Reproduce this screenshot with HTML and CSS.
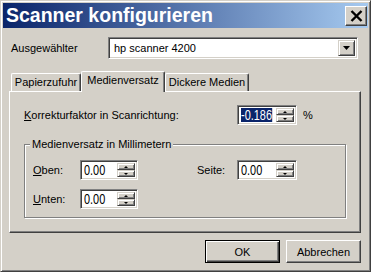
FILE: index.html
```html
<!DOCTYPE html>
<html lang="de">
<head>
  <meta charset="UTF-8">
  <title>Scanner konfigurieren</title>
  <link rel="stylesheet" href="styles.css">
</head>
<body>
  <div class="window">
    <div class="titlebar">
      <span class="title">Scanner konfigurieren</span>
      <div class="close">
        <svg width="13" height="12" viewBox="0 0 13 12"><path d="M1.5 1 L11.5 11 M11.5 1 L1.5 11" stroke="#000" stroke-width="2.4" fill="none"/></svg>
      </div>
    </div>

    <div class="content">
      <!-- Scanner selection -->
      <div class="select-row">
        <span class="select-label">Ausgewählter</span>
        <div class="combo">
          <span class="combo-text">hp scanner 4200</span>
          <div class="combo-btn">
            <svg width="7" height="4" viewBox="0 0 7 4"><polygon points="0,0 7,0 3.5,4" fill="#000"/></svg>
          </div>
        </div>
      </div>

      <!-- Tabs -->
      <div class="tabs">
        <div class="tab tab-paper">Papierzufuhr</div>
        <div class="tab tab-active">Medienversatz</div>
        <div class="tab tab-thick">Dickere Medien</div>
      </div>

      <div class="panel">
        <div class="factor-row">
          <span class="factor-label"><u>K</u>orrekturfaktor in Scanrichtung:</span>
          <div class="spin spin-wide">
            <div class="spin-value"><span class="num selected">-0.186</span></div>
            <div class="spin-btns">
              <div class="spin-btn"><i class="arrow-up"></i></div>
              <div class="spin-btn"><i class="arrow-down"></i></div>
            </div>
          </div>
          <span class="unit">%</span>
        </div>

        <fieldset class="group">
          <legend>Medienversatz in Millimetern</legend>
          <div class="group-grid">
            <span class="field-label"><u>O</u>ben:</span>
            <div class="spin">
              <div class="spin-value"><span class="num">0.00</span></div>
              <div class="spin-btns">
                <div class="spin-btn"><i class="arrow-up"></i></div>
                <div class="spin-btn"><i class="arrow-down"></i></div>
              </div>
            </div>
            <span></span>
            <span class="field-label">Seite:</span>
            <div class="spin spin-wide">
              <div class="spin-value"><span class="num">0.00</span></div>
              <div class="spin-btns">
                <div class="spin-btn"><i class="arrow-up"></i></div>
                <div class="spin-btn"><i class="arrow-down"></i></div>
              </div>
            </div>

            <span class="field-label"><u>U</u>nten:</span>
            <div class="spin">
              <div class="spin-value"><span class="num">0.00</span></div>
              <div class="spin-btns">
                <div class="spin-btn"><i class="arrow-up"></i></div>
                <div class="spin-btn"><i class="arrow-down"></i></div>
              </div>
            </div>
          </div>
        </fieldset>
      </div>

      <!-- Dialog buttons -->
      <div class="buttons">
        <div class="btn btn-default">OK</div>
        <div class="btn">Abbrechen</div>
      </div>
    </div>
  </div>
</body>
</html>
```

FILE: styles.css
```css
body {
  margin: 0;
  font-family: "Liberation Sans", Arial, sans-serif;
  font-size: 11px;
  color: #000;
  background: #d4d0c8;
}
.window {
  width: 371px;
  height: 272px;
  box-sizing: border-box;
  padding: 2px;
  background: #d4d0c8;
  border: 1px solid;
  border-color: #d4d0c8 #404040 #404040 #d4d0c8;
  box-shadow: inset 1px 1px #fff, inset -1px -1px #808080;
}
.titlebar {
  height: 25px;
  display: flex;
  align-items: center;
  justify-content: space-between;
  padding: 0 1px 0 3px;
  background: linear-gradient(to right, #0a246a, #a6caf0);
}
.title {
  color: #fff;
  font-weight: bold;
  font-size: 19.5px;
}
.close {
  width: 22px;
  height: 20px;
  box-sizing: border-box;
  display: flex;
  align-items: center;
  justify-content: center;
  background: #d4d0c8;
  border: 1px solid;
  border-color: #fff #404040 #404040 #fff;
  box-shadow: inset -1px -1px #808080;
}
.content {
  padding: 9px 7px 0 6px;
}
.select-row {
  display: flex;
  align-items: center;
}
.select-label {
  width: 97px;
  margin-left: 2px;
}
.combo {
  width: 250px;
  height: 22px;
  box-sizing: border-box;
  display: flex;
  align-items: center;
  background: #fff;
  border: 1px solid;
  border-color: #808080 #fff #fff #808080;
  box-shadow: inset 1px 1px #404040, inset -1px -1px #d4d0c8;
  padding: 2px;
}
.combo-text {
  flex: 1;
  padding-left: 3px;
  font-size: 11px;
}
.combo-btn {
  width: 17px;
  height: 16px;
  box-sizing: border-box;
  display: flex;
  align-items: center;
  justify-content: center;
  background: #d4d0c8;
  border: 1px solid;
  border-color: #d4d0c8 #404040 #404040 #d4d0c8;
  box-shadow: inset 1px 1px #fff, inset -1px -1px #808080;
}

/* tabs */
.tabs {
  display: flex;
  align-items: flex-end;
  height: 21px;
  margin-top: 11px;
  padding-left: 2px;
}
.tab {
  height: 18px;
  box-sizing: border-box;
  display: flex;
  align-items: center;
  justify-content: center;
  padding-bottom: 1px;
  border-top: 1px solid #fff;
  border-left: 1px solid #fff;
  border-right: 1px solid #404040;
  border-top-left-radius: 2px;
  border-top-right-radius: 2px;
  box-shadow: inset -1px 0 #808080;
}
.tab-paper {
  width: 70px;
}
.tab-active {
  width: 84px;
  height: 21px;
  margin-bottom: -1px;
  padding-bottom: 4px;
  position: relative;
  z-index: 1;
  background: #d4d0c8;
}
.tab-thick {
  width: 84px;
}
.panel {
  height: 142px;
  box-sizing: border-box;
  padding: 13px 14px 0 14px;
  border: 1px solid;
  border-color: #fff #404040 #404040 #fff;
  box-shadow: inset -1px -1px #808080;
}
.factor-row {
  display: flex;
  align-items: center;
  height: 20px;
}
.factor-label {
  width: 213px;
}
.unit {
  margin-left: 6px;
}

/* spin edit */
.spin {
  width: 58px;
  height: 20px;
  box-sizing: border-box;
  display: flex;
  background: #fff;
  border: 1px solid;
  border-color: #808080 #fff #fff #808080;
  box-shadow: inset 1px 1px #404040, inset -1px -1px #d4d0c8;
  padding: 2px;
}
.spin-wide {
  width: 60px;
}
.spin-value {
  flex: 1;
  display: flex;
  align-items: center;
  padding-left: 1px;
  overflow: hidden;
}
.num {
  display: inline-block;
  font-size: 14px;
  line-height: 14px;
  transform: scaleX(0.78);
  transform-origin: left center;
}
.selected {
  background: #0a246a;
  color: #fff;
}
.spin-btns {
  width: 18px;
  display: flex;
  flex-direction: column;
}
.spin-btn {
  flex: 1;
  box-sizing: border-box;
  display: flex;
  align-items: center;
  justify-content: center;
  background: #d4d0c8;
  border: 1px solid;
  border-color: #d4d0c8 #404040 #404040 #d4d0c8;
  box-shadow: inset 1px 1px #fff, inset -1px -1px #808080;
}
.arrow-up {
  width: 0;
  height: 0;
  border-left: 2px solid transparent;
  border-right: 2px solid transparent;
  border-bottom: 2px solid #000;
}
.arrow-down {
  width: 0;
  height: 0;
  border-left: 2px solid transparent;
  border-right: 2px solid transparent;
  border-top: 2px solid #000;
}

/* group box */
.group {
  margin: 13px 0 0 0;
  width: 322px;
  box-sizing: border-box;
  padding: 9px 0 8px 8px;
  border: 1px solid #808080;
  box-shadow: 1px 1px #fff, inset 1px 1px #fff;
}
.group legend {
  padding: 0 2px;
  margin-left: -3px;
  background: #d4d0c8;
  line-height: 13px;
}
.group-grid {
  display: grid;
  grid-template-columns: 47px 58px 59px 40px 60px;
  grid-auto-rows: 20px;
  row-gap: 9px;
  align-items: center;
}

/* dialog buttons */
.buttons {
  display: flex;
  justify-content: flex-end;
  gap: 6px;
  margin-top: 7px;
}
.btn {
  width: 75px;
  height: 23px;
  box-sizing: border-box;
  display: flex;
  align-items: center;
  justify-content: center;
  border: 1px solid;
  border-color: #fff #404040 #404040 #fff;
  box-shadow: inset -1px -1px #808080;
}
.btn-default {
  border-color: #000;
  box-shadow: inset 1px 1px #fff, inset -1px -1px #404040, inset -2px -2px #808080;
}
```
